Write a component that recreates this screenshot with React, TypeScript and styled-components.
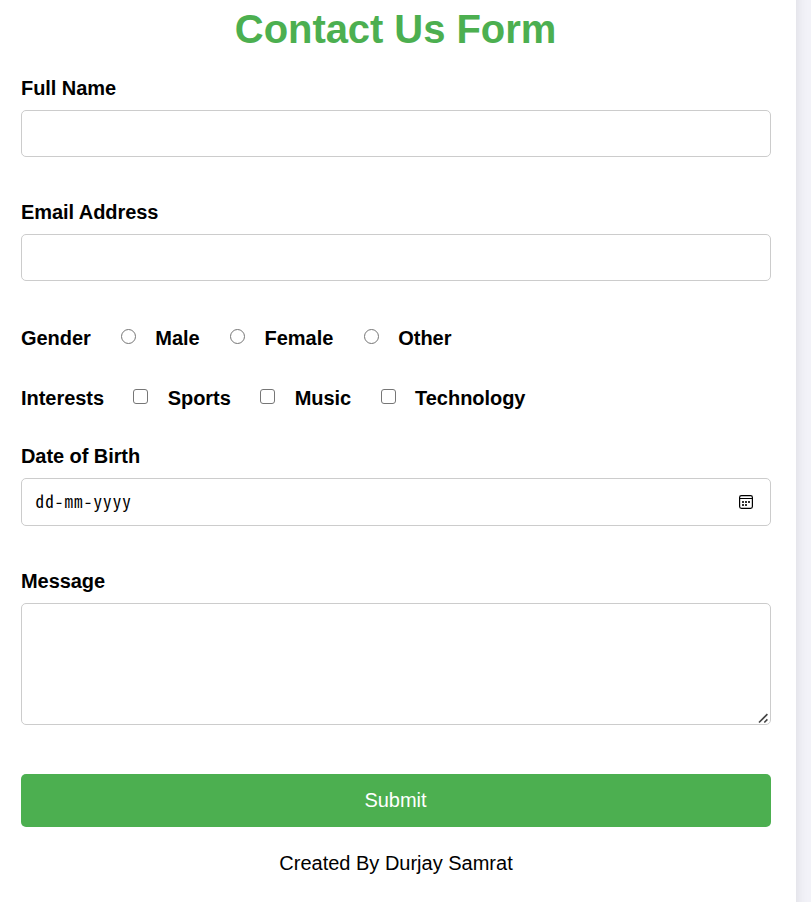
import React from "react";
import styled, { createGlobalStyle, css } from "styled-components";

const GlobalStyle = createGlobalStyle`
  * { box-sizing: border-box; }
  html, body { height: 100%; overflow: hidden; }
  body {
    margin: 0;
    background: #f2f2f8;
    color: #000;
    font-family: Arial, "Liberation Sans", sans-serif;
    font-size: 20px;
    line-height: 23px;
  }
`;

const Viewport = styled.div`
  height: 902px;
  overflow: hidden;
`;

const Card = styled.main`
  width: 796px;
  height: 950px;
  margin-top: -24px;
  padding: 30px 25px 0 21px;
  background: #fff;
  box-shadow: 0 0 12px rgba(0, 0, 0, 0.1);
`;

const Title = styled.h1`
  margin: 0 1px 25px 0;
  color: #4caf50;
  font-size: 40px;
  line-height: 46px;
  letter-spacing: -0.06px;
  text-align: center;
`;

const Field = styled.div<{ $gap: number }>`
  display: flex;
  flex-direction: column;
  gap: 10px;
  margin-bottom: ${(p) => p.$gap}px;
`;

const Label = styled.label`
  font-weight: bold;
  letter-spacing: -0.07px;
`;

const box = css`
  display: block;
  width: 100%;
  border: 1px solid #ccc;
  border-radius: 5px;
  background: #fff;
  outline: none;
`;

const TextInput = styled.input`
  ${box}
  height: 47px;
  padding: 12px;
  font: inherit;
`;

const DateBox = styled.div`
  ${box}
  display: flex;
  align-items: center;
  justify-content: space-between;
  height: 48px;
  padding: 0 16px 0 13.5px;
  font-family: "Noto Sans Mono CJK SC", "DejaVu Sans Mono", monospace;
  font-size: 17px;
  letter-spacing: 1.15px;

  > span {
    padding-bottom: 3px;
  }
`;

const MessageBox = styled.div`
  ${box}
  display: flex;
  height: 122px;
  align-items: flex-end;
  justify-content: flex-end;
`;

const MessageInput = styled.textarea`
  flex: 1;
  align-self: stretch;
  padding: 12px;
  border: 0;
  outline: none;
  resize: none;
  background: transparent;
  font: inherit;
`;

const OptionRow = styled.div<{ $bottom: number; $start: number; $gap: number }>`
  display: flex;
  align-items: center;
  gap: ${(p) => p.$gap}px;
  height: 23px;
  margin-bottom: ${(p) => p.$bottom}px;
  font-weight: bold;
  letter-spacing: -0.04px;

  > span {
    margin-right: ${(p) => p.$start - p.$gap}px;
  }
`;

const Option = styled.label`
  display: flex;
  align-items: center;
  gap: 19.5px;
`;

const Choice = styled.input`
  appearance: none;
  width: 15px;
  height: 15px;
  margin: 0 0 4px;
  border: 1px solid #767676;
  border-radius: ${(p) => (p.type === "radio" ? "50%" : "3px")};
  background: #fff;
`;

const Submit = styled.button`
  display: block;
  width: 100%;
  height: 53px;
  padding: 0 1px 0 0;
  border: 0;
  border-radius: 5px;
  background: #4caf50;
  color: #fff;
  font: inherit;
`;

const Credit = styled.p`
  margin: 25px 0 0;
  text-align: center;
`;

const CalendarIcon = () => (
  <svg width="16" height="16" viewBox="0 0 16 16" fill="none">
    <rect x="1.6" y="1.6" width="12.8" height="12.8" rx="1.8" stroke="#000" strokeWidth="1.2" />
    <path d="M2 4.5h12" stroke="#000" strokeWidth="1" />
    <path
      d="M4 7h2v2H4zM7 7h2v2H7zM10 7h2v2h-2zM4 10h2v2H4zM7 10h2v2H7z"
      fill="#333"
    />
  </svg>
);

const ResizeGrip = () => (
  <svg width="12" height="11" viewBox="0 0 12 11" fill="none">
    <path d="M1 9.5 9.4 1.1M6.3 9.5l3.1-3.1" stroke="#444" strokeWidth="1.6" />
  </svg>
);

export default function App() {
  return (
    <Viewport>
      <GlobalStyle />
      <Card>
        <Title>Contact Us Form</Title>
        <Field $gap={44}>
          <Label htmlFor="name">Full Name</Label>
          <TextInput id="name" type="text" />
        </Field>
        <Field $gap={46}>
          <Label htmlFor="email">Email Address</Label>
          <TextInput id="email" type="email" />
        </Field>
        <OptionRow $bottom={37} $start={30} $gap={30.5}>
          <span>Gender</span>
          {["Male", "Female", "Other"].map((name) => (
            <Option key={name}>
              <Choice type="radio" name="gender" />
              {name}
            </Option>
          ))}
        </OptionRow>
        <OptionRow $bottom={35} $start={29.2} $gap={29.4}>
          <span>Interests</span>
          {["Sports", "Music", "Technology"].map((name) => (
            <Option key={name}>
              <Choice type="checkbox" />
              {name}
            </Option>
          ))}
        </OptionRow>
        <Field $gap={44}>
          <Label>Date of Birth</Label>
          <DateBox>
            <span>dd-mm-yyyy</span>
            <CalendarIcon />
          </DateBox>
        </Field>
        <Field $gap={49}>
          <Label htmlFor="message">Message</Label>
          <MessageBox>
            <MessageInput id="message" />
            <ResizeGrip />
          </MessageBox>
        </Field>
        <Submit type="button">Submit</Submit>
        <Credit>Created By Durjay Samrat</Credit>
      </Card>
    </Viewport>
  );
}
